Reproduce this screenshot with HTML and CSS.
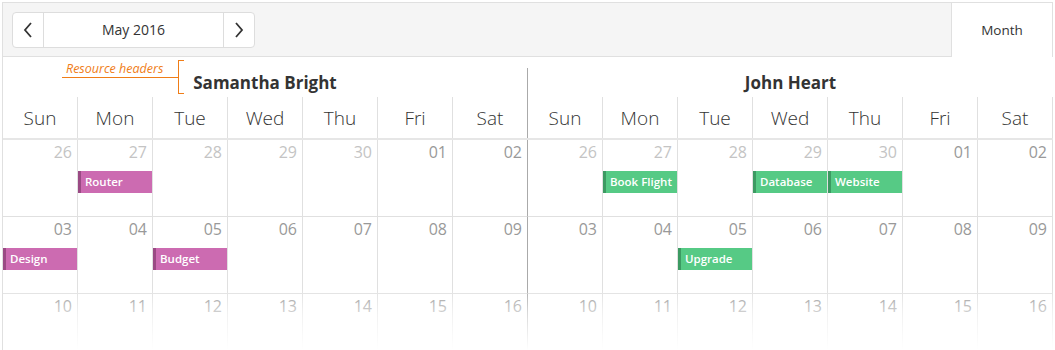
FILE: index.html
```html
<!DOCTYPE html>
<html lang="en">
<head>
    <meta charset="UTF-8">
    <title>Scheduler - Resources</title>
    <link rel="stylesheet" href="styles.css">
</head>
<body>
    <div class="scheduler">
        <div class="toolbar">
            <div class="toolbar-left">
                <div class="nav">
                    <button class="nav-btn" aria-label="Previous">
                        <svg width="10" height="16" viewBox="0 0 10 16"><path d="M8 1 L2 8 L8 15" fill="none" stroke="#333" stroke-width="1.8"/></svg>
                    </button>
                    <div class="nav-label">May 2016</div>
                    <button class="nav-btn" aria-label="Next">
                        <svg width="10" height="16" viewBox="0 0 10 16"><path d="M2 1 L8 8 L2 15" fill="none" stroke="#333" stroke-width="1.8"/></svg>
                    </button>
                </div>
            </div>
            <div class="view-tab">Month</div>
        </div>

        <div class="resources">
            <div class="resource first">Samantha Bright</div>
            <div class="resource">John Heart</div>
            <div class="callout">
                <span class="callout-text">Resource headers</span>
                <span class="callout-line"></span>
                <span class="callout-bracket"></span>
            </div>
        </div>

        <div class="days">
            <div class="day">Sun</div><div class="day">Mon</div><div class="day">Tue</div><div class="day">Wed</div><div class="day">Thu</div><div class="day">Fri</div><div class="day split">Sat</div>
            <div class="day">Sun</div><div class="day">Mon</div><div class="day">Tue</div><div class="day">Wed</div><div class="day">Thu</div><div class="day">Fri</div><div class="day">Sat</div>
        </div>

        <div class="grid">
            <!-- week 1 -->
            <div class="cell"><div class="date other">26</div></div>
            <div class="cell"><div class="date other">27</div><div class="appt pink">Router</div></div>
            <div class="cell"><div class="date other">28</div></div>
            <div class="cell"><div class="date other">29</div></div>
            <div class="cell"><div class="date other">30</div></div>
            <div class="cell"><div class="date">01</div></div>
            <div class="cell split"><div class="date">02</div></div>
            <div class="cell"><div class="date other">26</div></div>
            <div class="cell"><div class="date other">27</div><div class="appt green">Book Flight</div></div>
            <div class="cell"><div class="date other">28</div></div>
            <div class="cell"><div class="date other">29</div><div class="appt green">Database</div></div>
            <div class="cell"><div class="date other">30</div><div class="appt green">Website</div></div>
            <div class="cell"><div class="date">01</div></div>
            <div class="cell"><div class="date">02</div></div>

            <!-- week 2 -->
            <div class="cell"><div class="date">03</div><div class="appt pink">Design</div></div>
            <div class="cell"><div class="date">04</div></div>
            <div class="cell"><div class="date">05</div><div class="appt pink">Budget</div></div>
            <div class="cell"><div class="date">06</div></div>
            <div class="cell"><div class="date">07</div></div>
            <div class="cell"><div class="date">08</div></div>
            <div class="cell split"><div class="date">09</div></div>
            <div class="cell"><div class="date">03</div></div>
            <div class="cell"><div class="date">04</div></div>
            <div class="cell"><div class="date">05</div><div class="appt green">Upgrade</div></div>
            <div class="cell"><div class="date">06</div></div>
            <div class="cell"><div class="date">07</div></div>
            <div class="cell"><div class="date">08</div></div>
            <div class="cell"><div class="date">09</div></div>

            <!-- week 3 -->
            <div class="cell last"><div class="date">10</div></div>
            <div class="cell last"><div class="date">11</div></div>
            <div class="cell last"><div class="date">12</div></div>
            <div class="cell last"><div class="date">13</div></div>
            <div class="cell last"><div class="date">14</div></div>
            <div class="cell last"><div class="date">15</div></div>
            <div class="cell last split"><div class="date">16</div></div>
            <div class="cell last"><div class="date">10</div></div>
            <div class="cell last"><div class="date">11</div></div>
            <div class="cell last"><div class="date">12</div></div>
            <div class="cell last"><div class="date">13</div></div>
            <div class="cell last"><div class="date">14</div></div>
            <div class="cell last"><div class="date">15</div></div>
            <div class="cell last"><div class="date">16</div></div>
        </div>
    </div>
</body>
</html>
```

FILE: styles.css
```css
html, body {
    overflow: hidden;
}
body {
    margin: 0;
    font-family: 'Open Sans', 'Noto Sans', sans-serif;
    color: #333;
    background-color: #fff;
}
.scheduler {
    position: relative;
    margin: 2px 0 0 2px;
    width: 1050px;
    border-left: 1px solid #e0e0e0;
}
.toolbar {
    display: flex;
    height: 55px;
    border-top: 1px solid #e0e0e0;
    box-sizing: border-box;
}
.toolbar-left {
    flex: 1;
    background-color: #f5f5f5;
    border-bottom: 1px solid #e0e0e0;
    padding: 9px 9px 0;
}
.nav {
    display: inline-flex;
    height: 36px;
    box-sizing: border-box;
    border: 1px solid #ddd;
    border-radius: 4px;
    background-color: #fff;
}
.nav-btn {
    width: 30px;
    padding: 0;
    border: none;
    background: none;
    display: flex;
    align-items: center;
    justify-content: center;
}
.nav-label {
    width: 181px;
    border-left: 1px solid #ddd;
    border-right: 1px solid #ddd;
    box-sizing: border-box;
    text-align: center;
    font-size: 14px;
    line-height: 34px;
    color: #333;
}
.view-tab {
    width: 102px;
    box-sizing: border-box;
    border-left: 1px solid #e0e0e0;
    border-right: 1px solid #e0e0e0;
    text-align: center;
    font-size: 13.5px;
    line-height: 54px;
    color: #333;
}
.resources {
    position: relative;
    display: grid;
    grid-template-columns: 525px 525px;
    padding-top: 11px;
}
.resource {
    height: 29px;
    line-height: 30px;
    text-align: center;
    font-size: 17px;
    font-weight: 700;
    color: #333;
}
.resource.first {
    border-right: 1px solid #aaa;
    box-sizing: border-box;
}
.callout {
    position: absolute;
    left: 0;
    top: 0;
    color: #f07d17;
}
.callout-text {
    position: absolute;
    left: 63px;
    top: 3px;
    font-size: 12.5px;
    font-style: italic;
    white-space: nowrap;
}
.callout-line {
    position: absolute;
    left: 59px;
    top: 20px;
    width: 117px;
    height: 1px;
    background-color: #f07d17;
}
.callout-bracket {
    position: absolute;
    left: 175px;
    top: 3px;
    width: 5px;
    height: 32px;
    border: 1px solid #f07d17;
    border-right: none;
}
.days {
    display: grid;
    grid-template-columns: repeat(14, 75px);
    border-bottom: 2px solid #e6e6e6;
}
.day {
    height: 41px;
    line-height: 42px;
    text-align: center;
    font-size: 19px;
    font-weight: 300;
    color: #333;
    border-right: 1px solid #e0e0e0;
    box-sizing: border-box;
}
.grid {
    position: relative;
    display: grid;
    grid-template-columns: repeat(14, 75px);
}
.grid::after {
    content: "";
    position: absolute;
    left: 0;
    right: 0;
    bottom: 0;
    height: 62px;
    background: linear-gradient(rgba(255, 255, 255, 0), rgba(255, 255, 255, 0.55) 40%, #fff);
}
.cell {
    height: 77px;
    box-sizing: border-box;
    border-right: 1px solid #e0e0e0;
    border-bottom: 1px solid #e0e0e0;
    padding-top: 1px;
}
.cell.last {
    height: 56px;
    border-bottom: none;
}
.split {
    border-right-color: #aaa;
}
.day.split {
    border-right-color: #aaa;
}
.date {
    font-size: 16px;
    line-height: 22px;
    text-align: right;
    padding-right: 5px;
    color: #999;
}
.date.other {
    color: #c4c4c4;
}
.appt {
    margin-top: 8px;
    height: 22px;
    line-height: 21px;
    box-sizing: border-box;
    padding-left: 4px;
    font-size: 11.5px;
    font-weight: 600;
    color: #fff;
    white-space: nowrap;
    overflow: hidden;
}
.appt.pink {
    background-color: #cc6bb1;
    border-left: 3px solid #9a4a84;
}
.appt.green {
    background-color: #56ca85;
    border-left: 3px solid #3c9a62;
}
```
